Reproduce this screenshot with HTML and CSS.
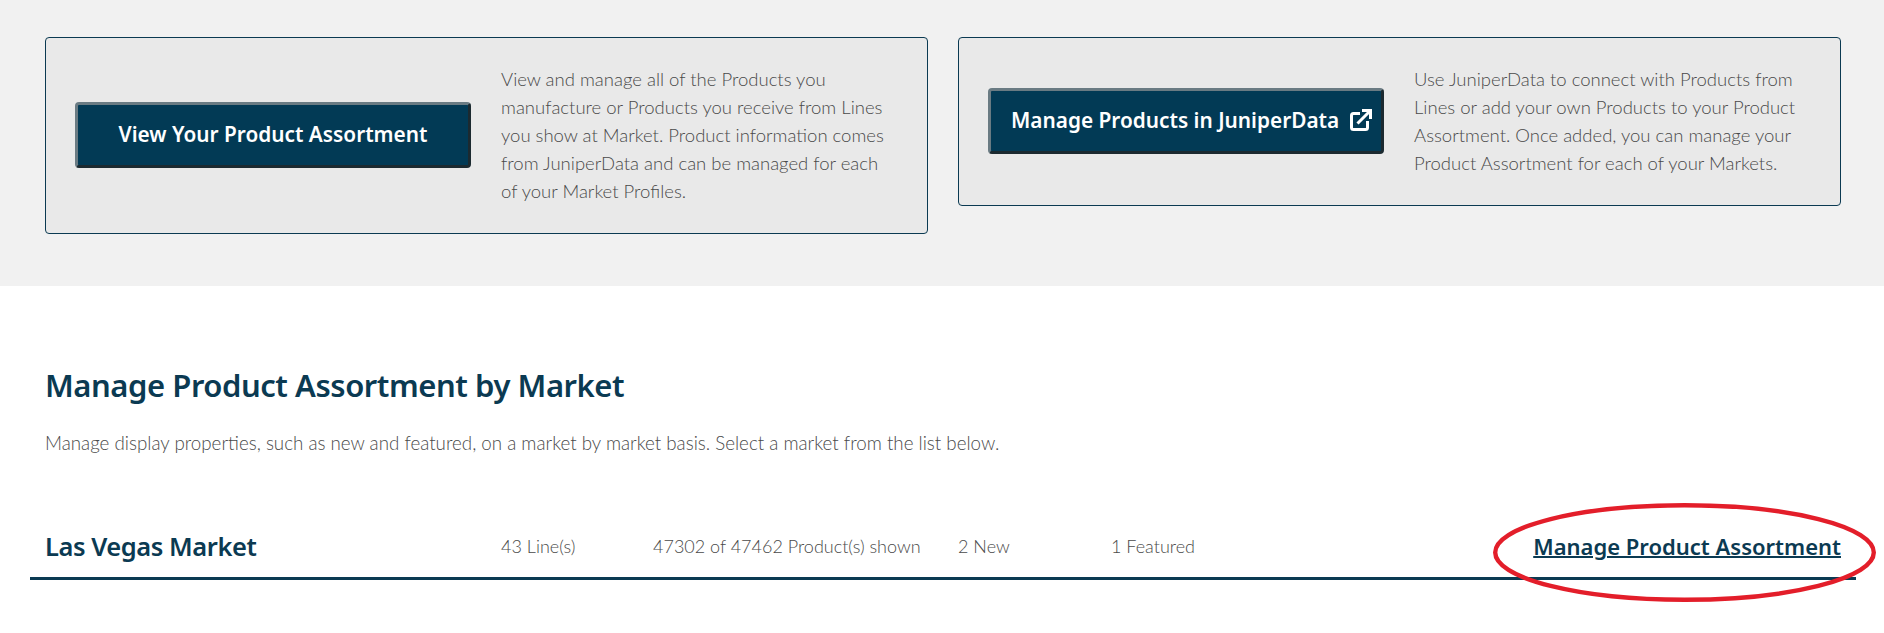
FILE: index.html
```html
<!DOCTYPE html>
<html>
<head>
<title>Manage Product Assortment</title>
<link rel="stylesheet" href="styles.css">
</head>
<body>

<div class="top-band">
  <div class="info-card">
    <a class="btn-dark" href="#">View Your Product Assortment</a>
    <p class="info-text">View and manage all of the Products you manufacture or Products you receive from Lines you show at Market. Product information comes from JuniperData and can be managed for each of your Market Profiles.</p>
  </div>
  <div class="info-card">
    <a class="btn-dark btn-external" href="#">Manage Products in JuniperData
      <svg class="ext-icon" viewBox="0 0 22 22" width="22" height="22" fill="none" stroke="#fff" stroke-width="3">
        <path d="M10 4.5H3.5a2 2 0 0 0-2 2v12a2 2 0 0 0 2 2h12a2 2 0 0 0 2-2V12"/>
        <path d="M7.5 14.5L19 3"/>
        <path d="M12 1.5h8.5V10"/>
      </svg>
    </a>
    <p class="info-text">Use JuniperData to connect with Products from Lines or add your own Products to your Product Assortment. Once added, you can manage your Product Assortment for each of your Markets.</p>
  </div>
</div>

<div class="market-section">
  <h2>Manage Product Assortment by Market</h2>
  <p class="market-intro">Manage display properties, such as new and featured, on a market by market basis. Select a market from the list below.</p>

  <div class="market-row">
    <h3>Las Vegas Market</h3>
    <span class="stat stat-lines">43 Line(s)</span>
    <span class="stat stat-products">47302 of 47462 Product(s) shown</span>
    <span class="stat stat-new">2 New</span>
    <span class="stat stat-featured">1 Featured</span>
    <a class="manage-link" href="#">Manage Product Assortment</a>
  </div>
</div>

<svg class="red-circle" viewBox="0 0 383 99" width="383" height="99" fill="none">
  <ellipse cx="191.5" cy="49.5" rx="189.3" ry="47.3" stroke="#e31e2a" stroke-width="4.4"/>
</svg>

</body>
</html>
```

FILE: styles.css
```css
html, body {
  margin: 0;
  padding: 0;
}

body {
  height: 633px;
  background-color: #fff;
  color: #4a4a4a;
  font-family: "Lato", "Liberation Sans", sans-serif;
  font-size: 18px;
  font-weight: 300;
  overflow: hidden;
  position: relative;
}

.top-band {
  display: flex;
  align-items: flex-start;
  gap: 30px;
  height: 249px;
  padding: 37px 43px 0 45px;
  background-color: #f1f1f1;
}

.info-card {
  flex: 1;
  display: flex;
  align-items: center;
  gap: 30px;
  padding: 27px 29px 28px;
  background-color: #e9e9e9;
  border: 1px solid #0b3a52;
  border-radius: 4px;
}

.btn-dark {
  flex: none;
  box-sizing: border-box;
  display: flex;
  align-items: center;
  justify-content: center;
  width: 396px;
  height: 66px;
  padding-bottom: 2px;
  background-color: #023a55;
  border-style: solid;
  border-width: 3px;
  border-color: #6a7b83 #1c2a30 #1c2a30 #6a7b83;
  border-radius: 4px;
  color: #fff;
  font-family: "Noto Sans", sans-serif;
  font-size: 20.8px;
  font-weight: 600;
  text-decoration: none;
}

.btn-external {
  justify-content: flex-start;
  padding-left: 20px;
}

.ext-icon {
  margin-left: 11px;
}

.info-text {
  margin: 0;
  font-size: 18.5px;
  line-height: 28px;
}

.market-section {
  position: relative;
  padding: 0 28px 0 30px;
}

h2 {
  margin: 78px 0 0 15px;
  color: #0b3a52;
  font-family: "Noto Sans", sans-serif;
  font-size: 31px;
  font-weight: 600;
  letter-spacing: -0.45px;
  line-height: 42px;
}

.market-intro {
  margin: 25px 0 0 15px;
  font-size: 18.75px;
  line-height: 24px;
}

.market-row {
  display: flex;
  align-items: center;
  box-sizing: content-box;
  height: 58px;
  margin-top: 62px;
  padding: 0 15px 2px;
  border-bottom: 3px solid #0b3a52;
}

h3 {
  flex: none;
  width: 456px;
  margin: 0;
  color: #0b3a52;
  font-family: "Noto Sans", sans-serif;
  font-size: 25.5px;
  font-weight: 600;
  letter-spacing: -0.45px;
}

.stat {
  flex: none;
}

.stat-lines { width: 152px; }
.stat-products { width: 305px; }
.stat-new { width: 153px; }

.manage-link {
  margin-left: auto;
  color: #0b3a52;
  font-family: "Noto Sans", sans-serif;
  font-size: 22px;
  font-weight: 600;
  text-decoration-thickness: 2px;
}

/* hand drawn annotation lying over the row */
.red-circle {
  position: absolute;
  left: 1493px;
  top: 503px;
}
```
